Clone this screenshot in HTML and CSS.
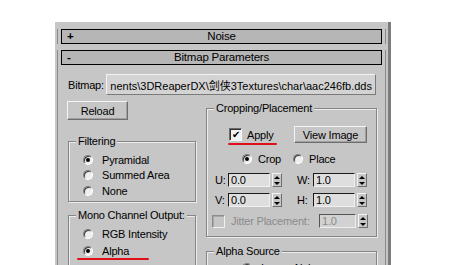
FILE: index.html
```html
<!DOCTYPE html>
<html lang="en">
<head>
  <meta charset="UTF-8" />
  <title>Bitmap Parameters</title>
  <link rel="stylesheet" href="styles.css">
</head>
<body>
  <div class="panel">
    <div class="rollout closed">
      <div class="bar"><span class="sign">+</span><span class="bar-title">Noise</span></div>
    </div>

    <div class="rollout">
      <div class="bar"><span class="sign">-</span><span class="bar-title">Bitmap Parameters</span></div>

      <div class="content">
        <div class="bitmap-row">
          <span class="bitmap-label">Bitmap:</span>
          <div class="path-btn"><span>nents\3DReaperDX\剑侠3Textures\char\aac246fb.dds</span></div>
        </div>

        <div class="columns">
          <div class="col-left">
            <div class="btn reload">Reload</div>

            <div class="group filtering">
              <div class="group-title">Filtering</div>
              <div class="opt"><span class="radio on"></span>Pyramidal</div>
              <div class="opt"><span class="radio"></span>Summed Area</div>
              <div class="opt"><span class="radio"></span>None</div>
            </div>

            <div class="group mono">
              <div class="group-title">Mono Channel Output:</div>
              <div class="opt"><span class="radio"></span>RGB Intensity</div>
              <div class="opt"><span class="marked wide"><span class="radio on"></span>Alpha</span></div>
            </div>
          </div>

          <div class="col-right">
            <div class="group cropping">
              <div class="group-title">Cropping/Placement</div>
              <div class="apply-row">
                <span class="apply"><span class="marked"><span class="check on">&#10004;</span>Apply</span></span>
                <div class="btn view">View Image</div>
              </div>
              <div class="crop-row">
                <span class="opt-inline crop"><span class="radio on"></span>Crop</span>
                <span class="opt-inline"><span class="radio"></span>Place</span>
              </div>
              <div class="num-row first">
                <span class="nlabel">U:</span><span class="num">0.0</span><span class="spin"><i class="up"></i><i class="down"></i></span>
                <span class="nlabel second">W:</span><span class="num">1.0</span><span class="spin"><i class="up"></i><i class="down"></i></span>
              </div>
              <div class="num-row">
                <span class="nlabel">V:</span><span class="num">0.0</span><span class="spin"><i class="up"></i><i class="down"></i></span>
                <span class="nlabel second">H:</span><span class="num">1.0</span><span class="spin"><i class="up"></i><i class="down"></i></span>
              </div>
              <div class="num-row jitter">
                <span class="check off"></span><span class="jitter-label">Jitter Placement:</span>
                <span class="num disabled">1.0</span><span class="spin"><i class="up"></i><i class="down"></i></span>
              </div>
            </div>

            <div class="group alpha">
              <div class="group-title">Alpha Source</div>
              <div class="opt"><span class="radio on"></span>Image Alpha</div>
            </div>
          </div>
        </div>
      </div>
    </div>
  </div>
</body>
</html>
```

FILE: styles.css
```css
body { margin: 0; background: white; font-family: "Liberation Sans", Arial, sans-serif; font-size: 11px; letter-spacing: -0.2px; color: #000; }
.panel { margin: 22px 0 0 55px; width: 333px; height: 243px; background: #c6c6c6; border-right: 3px solid #7c7c7c; overflow: hidden; white-space: nowrap; }

.rollout { margin: 6px 2px 0 2px; padding: 0 3px; border-left: 1px solid #8a8a8a; border-right: 1px solid #8a8a8a; }
.rollout.closed { margin-top: 7px; }
.bar { height: 13px; border: 1px solid #000; background: #b6b6b6; display: flex; align-items: center; line-height: 13px; font-size: 11.5px; }
.sign { width: 14px; padding-left: 5px; font-weight: bold; }
.bar-title { flex: 1; text-align: center; padding-right: 19px; }

.content { padding: 9px 5px 0 7px; }
.bitmap-row { display: flex; align-items: center; height: 21px; }
.bitmap-label { width: 38px; }
.path-btn { flex: 1; height: 19px; margin-right: 1px; display: flex; justify-content: flex-end; align-items: center; overflow: hidden; background: #d3d3d3; border: 1px solid; border-color: #f2f2f2 #7a7a7a #7a7a7a #f2f2f2; padding-right: 3px; letter-spacing: 0; font-family: "Liberation Sans", "Noto Sans CJK SC", sans-serif; }

.columns { display: grid; grid-template-columns: 128px 171px; column-gap: 10px; margin-top: 6px; }

.btn { background: #c6c6c6; border: 1px solid; border-color: #f4f4f4 #6e6e6e #6e6e6e #f4f4f4; box-shadow: inset -1px -1px 0 #a0a0a0; display: flex; align-items: center; justify-content: center; }
.reload { width: 59px; height: 17px; margin-left: -1px; }

.group { border: 1px solid #858585; box-shadow: 1px 1px 0 #ececec, inset 1px 1px 0 #ececec; }
.group-title { width: fit-content; margin: -7px 0 0 7px; padding: 0 2px; height: 13px; line-height: 13px; background: #c6c6c6; }

.opt { display: flex; align-items: center; padding-left: 14px; height: 15.5px; }
.filtering { margin-top: 21px; padding: 0 0 2px; }
.filtering .group-title { margin-bottom: 4px; }
.mono { margin-top: 13px; padding: 0 0 6px; }
.mono .group-title { margin-bottom: 4px; }
.mono .opt { height: 17px; }

.radio { width: 8px; height: 8px; border-radius: 50%; border: 1px solid; border-color: #7e7e7e #ffffff #ffffff #7e7e7e; box-shadow: inset 1px 1px 0 #3a3a3a; background: #efefef; margin-right: 9px; position: relative; flex: none; }
.radio.on::after { content: ""; position: absolute; left: 2px; top: 2px; width: 4px; height: 4px; border-radius: 50%; background: #000; }

.marked { position: relative; display: inline-flex; align-items: center; }
.marked::after { content: ""; position: absolute; left: -1px; right: -3px; bottom: -4px; height: 2px; border-radius: 1px; background: #e0101a; }
.marked.wide::after { left: -6px; right: -20px; bottom: -3px; }

.cropping { margin-top: 7px; padding: 0 0 8px; }
.apply-row { display: flex; align-items: center; height: 17px; margin-top: 11px; }
.apply { width: 65px; margin-left: 22px; display: flex; }
.check { width: 11px; height: 11px; border: 1px solid; border-color: #6a6a6a #fafafa #fafafa #6a6a6a; box-shadow: inset 1px 1px 0 #303030; background: #f2f2f2; margin-right: 5px; font-size: 10px; line-height: 11px; text-align: center; flex: none; }
.check.off { background: #c6c6c6; border-color: #8c8c8c #f0f0f0 #f0f0f0 #8c8c8c; box-shadow: inset 1px 1px 0 #a6a6a6; margin: 0 6px 0 5px; }
.view { width: 71px; height: 15px; }

.crop-row { display: flex; align-items: center; height: 16px; margin-top: 8px; padding-left: 35px; }
.opt-inline { display: inline-flex; align-items: center; }
.opt-inline .radio { margin-right: 6px; }
.crop { width: 51px; }

.num-row { display: flex; align-items: center; height: 14px; margin-top: 6px; padding-left: 8px; }
.num-row.first { margin-top: 6px; }
.num-row.jitter { margin-top: 7px; }
.nlabel { width: 13px; }
.nlabel.second { width: 16px; margin-left: 15px; }
.num { width: 38px; height: 12px; padding-left: 2px; line-height: 12px; background: #dedede; border: 1px solid; border-color: #1a1a1a #f0f0f0 #f0f0f0 #1a1a1a; }
.num.disabled { width: 33px; color: #8a8a8a; background: #d2d2d2; border-color: #555 #eee #eee #555; }
.spin { width: 8px; height: 12px; margin-left: 2px; border: 1px solid; border-color: #f4f4f4 #6e6e6e #6e6e6e #f4f4f4; background: #c6c6c6; display: flex; flex-direction: column; justify-content: space-around; align-items: center; }
.spin i { width: 0; height: 0; border-left: 3px solid transparent; border-right: 3px solid transparent; }
.spin .up { border-bottom: 3px solid #000; }
.spin .down { border-top: 3px solid #000; }
.jitter { padding-left: 0; }
.jitter-label { width: 88px; color: #8a8a8a; }

.alpha { margin-top: 14px; padding: 0 0 6px; }
.alpha .group-title { margin-bottom: 2px; }
.alpha .opt { padding-left: 35px; }
```
